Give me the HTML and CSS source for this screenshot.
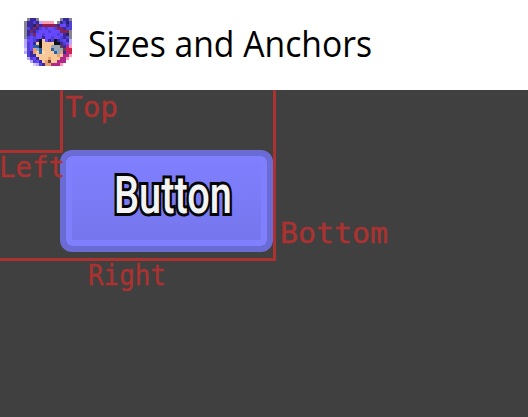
FILE: index.html
```
<!DOCTYPE html>
<html lang="en">
<head>
<meta charset="utf-8">
<title>Sizes and Anchors</title>
<link rel="stylesheet" href="styles.css">
</head>
<body>
<header class="titlebar">
  <svg class="avatar" id="avatar" viewBox="0 0 16 16" shape-rendering="crispEdges" aria-hidden="true"></svg>
  <svg class="title" width="300" height="54"><text x="0" y="39" textLength="284" lengthAdjust="spacingAndGlyphs">Sizes and Anchors</text></svg>
</header>
<main class="canvas">
  <div class="guide outer"></div>
  <button class="button"><svg width="132" height="60"><text x="6" y="43" textLength="118" lengthAdjust="spacingAndGlyphs">Button</text></svg></button>
  <div class="guide inner"></div>
  <svg class="label top" width="60" height="36"><text x="0" y="24" textLength="53" lengthAdjust="spacingAndGlyphs">Top</text></svg>
  <svg class="label left" width="70" height="36"><text x="0" y="24" textLength="66" lengthAdjust="spacingAndGlyphs">Left</text></svg>
  <svg class="label bottom" width="115" height="36"><text x="0" y="24" textLength="108" lengthAdjust="spacingAndGlyphs">Bottom</text></svg>
  <svg class="label right" width="85" height="36"><text x="0" y="24" textLength="78" lengthAdjust="spacingAndGlyphs">Right</text></svg>
</main>
<script src="avatar.js"></script>
</body>
</html>
```
FILE: styles.css
```
* { box-sizing: border-box; }
body { margin: 0; width: 528px; height: 417px; overflow: hidden; background: #404040; }
svg { display: block; overflow: visible; }
.titlebar { display: flex; height: 90px; padding: 18px 24px; gap: 16px; background: #fff; }
.avatar { width: 48px; height: 48px; flex: none; }
.title { flex: none; font: 37px "Open Sans", "Noto Sans", sans-serif; fill: #000; }
.canvas { position: relative; height: 327px; background: #404040; }
.guide { position: absolute; left: 0; top: 0; border: solid #ac3232; border-width: 0 3px 3px 0; }
.guide.inner { width: 63px; height: 63px; }
.guide.outer { width: 276px; height: 171px; }
.button {
  position: absolute; left: 60px; top: 60px; width: 213px; height: 102px; padding: 0;
  display: flex; align-items: center; justify-content: center;
  border: 6px solid #6b6bd5; border-radius: 12px;
  background: linear-gradient(#8080ff, #7575ec) padding-box;
  box-shadow: inset 0 0 0 6px #8080ff;
  font: 500 51px "Roboto", sans-serif;
}
.button svg { position: relative; left: 7px; top: -1px; }
.button text { fill: #f4f4f4; stroke: #050508; stroke-width: 6px; stroke-linejoin: miter; paint-order: stroke; }
.label { position: absolute; font: 29px "DejaVu Sans Mono", monospace; fill: #ac3232; stroke: #ac3232; stroke-width: 0.4px; }
.label.top { left: 65px; top: 3px; }
.label.left { left: -1px; top: 63px; }
.label.bottom { left: 280px; top: 129px; }
.label.right { left: 88px; top: 171px; }
```
FILE: avatar.js
```
const palette = {
  g: '#858593', d: '#28206c', p: '#5040d8', u: '#6848ff', v: '#3828a0',
  r: '#981c48', k: '#ff9cb8', l: '#b8a8ff', m: '#b02888', x: '#7a285c',
  s: '#f8c898', t: '#e8a070', o: '#f8dcb0', b: '#141018', n: '#2860a8',
  w: '#98a8b8', e: '#684038', c: '#d02050', i: '#d8ccff'
};
const rows = [
  '.gvvg.......gvvg',
  'gvvpvlkkkk.gvpdp',
  'gvvdxvrrrrxvuuvp',
  'gpvxvpupuuprxvpp',
  'gvxvpuuupuuuxrxg',
  'gvpxuupuuuupuvdg',
  'gpupuuvuupuupvpg',
  'luupvbsuvpbvpuvl',
  'lpuvsbssssbbvpul',
  'lpunnbssswwwevmk',
  'iputwnsssnwwwecc',
  'lpvtsnosssnwtvmc',
  '.pvvssssssstsmmk',
  '.lpuvssstsssmmk.',
  '..lpuvstessmmm..',
  '...ilpvttmmmk...'
];
const svg = document.getElementById('avatar');
rows.forEach((row, y) => [...row].forEach((key, x) => {
  if (key === '.') return;
  const cell = document.createElementNS('http://www.w3.org/2000/svg', 'rect');
  cell.setAttribute('x', x);
  cell.setAttribute('y', y);
  cell.setAttribute('width', 1);
  cell.setAttribute('height', 1);
  cell.setAttribute('fill', palette[key]);
  svg.append(cell);
}));
```
